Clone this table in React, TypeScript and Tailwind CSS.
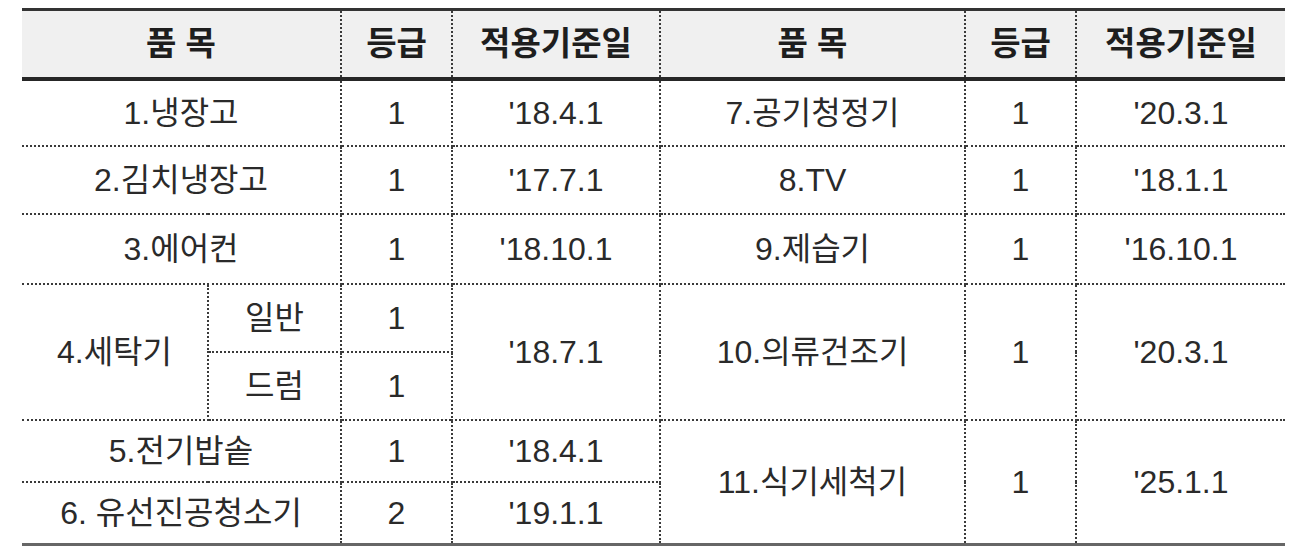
import React from "react";

const cell =
  "border-2 border-dotted border-[#3a3a3a] text-center align-middle p-0 whitespace-nowrap";
const th =
  cell +
  " font-bold text-[33px] text-[#1e1e1e] bg-[#f0f0f0] [border-bottom-style:solid] border-b-4 border-b-[#262626]";

export default function App() {
  return (
    <div className="w-[1302px] h-[554px] bg-white font-['Liberation_Sans','Noto_Sans_CJK_KR',sans-serif] text-[32px] text-[#2a2a2a] pt-2 pl-[22px]">
      <div className="w-[1263px] border-t-[3px] border-t-[#333] border-b-[3px] border-b-[#666]">
        <table className="w-full border-collapse border-hidden table-fixed">
          <colgroup>
            <col className="w-[186px]" />
            <col className="w-[133px]" />
            <col className="w-[111px]" />
            <col className="w-[208px]" />
            <col className="w-[305px]" />
            <col className="w-[111px]" />
            <col className="w-[209px]" />
          </colgroup>
          <tbody>
            <tr className="h-[68px]">
              <th colSpan={2} className={th}>
                품 목
              </th>
              <th className={th}>등급</th>
              <th className={th}>적용기준일</th>
              <th className={th}>품 목</th>
              <th className={th}>등급</th>
              <th className={th}>적용기준일</th>
            </tr>
            <tr className="h-[67px]">
              <td colSpan={2} className={cell}>1.냉장고</td>
              <td className={cell}>1</td>
              <td className={cell}>'18.4.1</td>
              <td className={cell}>7.공기청정기</td>
              <td className={cell}>1</td>
              <td className={cell}>'20.3.1</td>
            </tr>
            <tr className="h-[68px]">
              <td colSpan={2} className={cell}>2.김치냉장고</td>
              <td className={cell}>1</td>
              <td className={cell}>'17.7.1</td>
              <td className={cell}>8.TV</td>
              <td className={cell}>1</td>
              <td className={cell}>'18.1.1</td>
            </tr>
            <tr className="h-[70px]">
              <td colSpan={2} className={cell}>3.에어컨</td>
              <td className={cell}>1</td>
              <td className={cell}>'18.10.1</td>
              <td className={cell}>9.제습기</td>
              <td className={cell}>1</td>
              <td className={cell}>'16.10.1</td>
            </tr>
            <tr className="h-[68px]">
              <td rowSpan={2} className={cell}>4.세탁기</td>
              <td className={cell}>일반</td>
              <td className={cell}>1</td>
              <td rowSpan={2} className={cell}>'18.7.1</td>
              <td rowSpan={2} className={cell}>10.의류건조기</td>
              <td rowSpan={2} className={cell}>1</td>
              <td rowSpan={2} className={cell}>'20.3.1</td>
            </tr>
            <tr className="h-[68px]">
              <td className={cell}>드럼</td>
              <td className={cell}>1</td>
            </tr>
            <tr className="h-[62px]">
              <td colSpan={2} className={cell}>5.전기밥솥</td>
              <td className={cell}>1</td>
              <td className={cell}>'18.4.1</td>
              <td rowSpan={2} className={cell}>11.식기세척기</td>
              <td rowSpan={2} className={cell}>1</td>
              <td rowSpan={2} className={cell}>'25.1.1</td>
            </tr>
            <tr className="h-[61px]">
              <td colSpan={2} className={cell}>6. 유선진공청소기</td>
              <td className={cell}>2</td>
              <td className={cell}>'19.1.1</td>
            </tr>
          </tbody>
        </table>
      </div>
    </div>
  );
}
